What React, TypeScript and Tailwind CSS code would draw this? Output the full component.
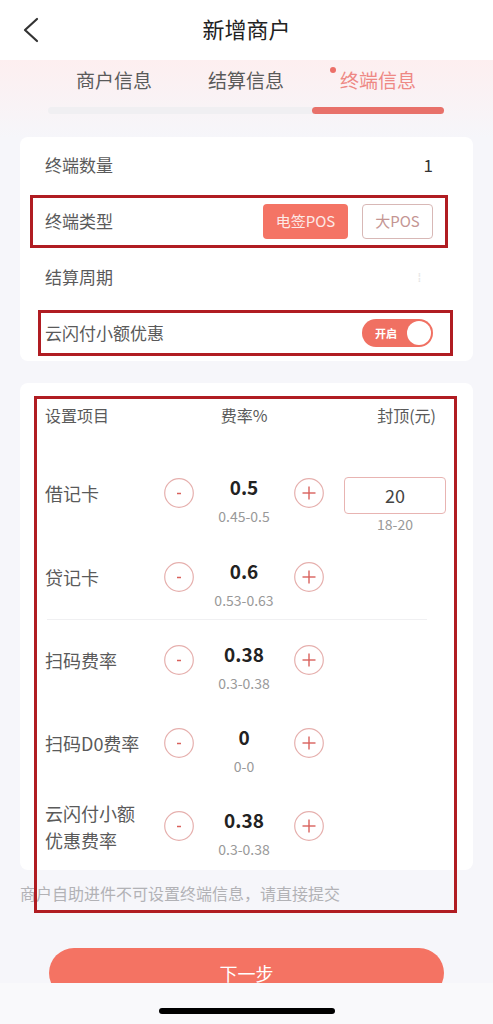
import React from "react";

type Rate = {
  label: string[];
  value: string;
  range: string;
  cap?: { value: string; range: string };
  height: string;
};

const rates: Rate[] = [
  { label: ["借记卡"], value: "0.5", range: "0.45-0.5", cap: { value: "20", range: "18-20" }, height: "h-[84px]" },
  { label: ["贷记卡"], value: "0.6", range: "0.53-0.63", height: "h-[60px]" },
  { label: ["扫码费率"], value: "0.38", range: "0.3-0.38", height: "h-[83px]" },
  { label: ["扫码D0费率"], value: "0", range: "0-0", height: "h-[83px]" },
  { label: ["云闪付小额", "优惠费率"], value: "0.38", range: "0.3-0.38", height: "h-[62px]" },
];

function CircleBtn({ plus }: { plus?: boolean }) {
  return (
    <div className="mt-[3px] h-[30px] w-[30px] shrink-0">
      <svg width="30" height="30" viewBox="0 0 30 30">
        <circle cx="15" cy="15" r="14.3" fill="none" stroke="#e6b0ae" strokeWidth="1.2" />
        {plus ? (
          <>
            <line x1="8.5" y1="15" x2="21.5" y2="15" stroke="#d9615c" strokeWidth="1.4" />
            <line x1="15" y1="8.5" x2="15" y2="21.5" stroke="#d9615c" strokeWidth="1.4" />
          </>
        ) : (
          <line x1="13" y1="15.5" x2="17" y2="15.5" stroke="#d9615c" strokeWidth="1.5" />
        )}
      </svg>
    </div>
  );
}

function RateRow({ r }: { r: Rate }) {
  const twoLine = r.label.length > 1;
  return (
    <div className={`flex items-start ${r.height}`}>
      <div
        className={`w-[119px] shrink-0 text-[18px] text-[#5a5a5a] ${
          twoLine ? "-mt-[8px] leading-[27px]" : "mt-[6px] leading-[24px]"
        }`}
      >
        {r.label.map((l) => (
          <div key={l}>{l}</div>
        ))}
      </div>
      <CircleBtn />
      <div className="flex w-[100px] shrink-0 flex-col items-center">
        <div className="text-[19px] font-bold leading-[24px] text-[#222]">{r.value}</div>
        <div className="mt-[7px] text-[14px] leading-[20px] text-[#999]">{r.range}</div>
      </div>
      <CircleBtn plus />
      {r.cap && (
        <div className="ml-[20px] flex w-[102px] flex-col items-center">
          <div className="mt-[2px] flex h-[37px] w-full items-center justify-center rounded-[4px] border border-[#e8b4b2] text-[18px] text-[#444]">
            {r.cap.value}
          </div>
          <div className="mt-[1px] text-[14px] leading-[18px] text-[#999]">{r.cap.range}</div>
        </div>
      )}
    </div>
  );
}

export default function App() {
  return (
    <div className="relative h-[1024px] w-[493px] overflow-hidden bg-[#f6f6fa] font-['Noto_Sans_CJK_SC','Noto_Sans',sans-serif]">
      <div className="h-[983px] overflow-hidden">
        {/* Header */}
        <div className="grid h-[60px] grid-cols-[60px_1fr_60px] items-center bg-white">
          <div className="pl-[22px]">
            <svg width="18" height="28" viewBox="0 0 18 28">
              <polyline points="15,3 3,14 15,25" fill="none" stroke="#333" strokeWidth="2.2" strokeLinecap="round" strokeLinejoin="round" />
            </svg>
          </div>
          <div className="-mt-[3px] text-center text-[22px] text-[#222]">新增商户</div>
          <div />
        </div>

        {/* Tabs */}
        <div className="h-[77px] bg-gradient-to-b from-[#fdeff0] to-[#f6f6fa]">
          <div className="mx-[48px] w-[396px]">
            <div className="grid grid-cols-3 pt-[6px] text-[19px] leading-[28px]">
              <div className="text-center text-[#5a5a5a]">商户信息</div>
              <div className="text-center text-[#5a5a5a]">结算信息</div>
              <div className="text-center">
                <span className="relative text-[#ee8884]">
                  <span className="absolute -left-[10px] top-[1px] h-[6px] w-[6px] rounded-full bg-[#ec6f68]" />
                  终端信息
                </span>
              </div>
            </div>
            <div className="mt-[13px] flex h-[7px] rounded-full bg-[#f0eff2]">
              <div className="ml-auto h-full w-[132px] rounded-full bg-[#e8716a]" />
            </div>
          </div>
        </div>

        {/* Terminal card */}
        <div className="mx-[20px] rounded-[8px] bg-white pl-[25px] pr-[40px] text-[17px] text-[#5a5a5a]">
          <div className="flex h-[56px] items-center justify-between">
            <span>终端数量</span>
            <span className="text-[#333]">1</span>
          </div>
          <div className="flex h-[56px] items-center justify-between">
            <span>终端类型</span>
            <div className="flex gap-[14px]">
              <div className="flex h-[35px] w-[85px] items-center justify-center rounded-[4px] bg-[#f47465] text-[15px] text-[#fde9e6]">
                电签POS
              </div>
              <div className="flex h-[35px] w-[71px] items-center justify-center rounded-[4px] border border-[#d8b8b6] text-[15px] text-[#c49593]">
                大POS
              </div>
            </div>
          </div>
          <div className="flex h-[56px] items-center justify-between">
            <span>结算周期</span>
            <span className="mr-[12px] text-[12px] leading-none text-[#e4e4e4]">⁞</span>
          </div>
          <div className="flex h-[56px] items-center justify-between">
            <span>云闪付小额优惠</span>
            <div className="flex h-[28px] w-[71px] items-center justify-between rounded-full bg-[#f07062] pl-[13px] pr-[2px]">
              <span className="text-[11px] font-bold text-white">开启</span>
              <span className="h-[24px] w-[24px] rounded-full bg-white" />
            </div>
          </div>
        </div>

        {/* Rate card */}
        <div className="mx-[20px] mt-[22px] rounded-[8px] bg-white pl-[25px] pt-[20px]">
          <div className="flex h-[24px] items-center text-[16px] text-[#5a5a5a]">
            <span className="w-[149px]">设置项目</span>
            <span className="w-[100px] text-center">费率%</span>
            <span className="ml-auto pr-[37px]">封顶(元)</span>
          </div>
          <div className="mt-[48px]">
            <RateRow r={rates[0]} />
            <RateRow r={rates[1]} />
            <div className="ml-[2px] h-px w-[380px] bg-[#f0f0f2]" />
            <div className="h-[22px]" />
            <RateRow r={rates[2]} />
            <RateRow r={rates[3]} />
            <RateRow r={rates[4]} />
          </div>
        </div>

        <div className="mt-[11px] pl-[20px] text-[16px] leading-[24px] text-[#b2b2b6]">
          商户自助进件不可设置终端信息，请直接提交
        </div>

        <div className="mx-[49px] mt-[43px] flex h-[50px] items-center justify-center rounded-full bg-[#f47363] text-[18px] text-white">
          下一步
        </div>
      </div>

      {/* Home indicator */}
      <div className="flex h-[41px] items-start justify-center bg-[#f9f9fb] pt-[25px]">
        <div className="h-[6px] w-[176px] rounded-full bg-black" />
      </div>

      {/* Annotation boxes */}
      <div className="pointer-events-none absolute left-[30px] top-[195px] h-[53px] w-[418px] border-[3px] border-[#b01c22]" />
      <div className="pointer-events-none absolute left-[38px] top-[310px] h-[46px] w-[415px] border-[3px] border-[#b01c22]" />
      <div className="pointer-events-none absolute left-[34px] top-[396px] h-[517px] w-[423px] border-[3px] border-[#b01c22]" />
    </div>
  );
}
